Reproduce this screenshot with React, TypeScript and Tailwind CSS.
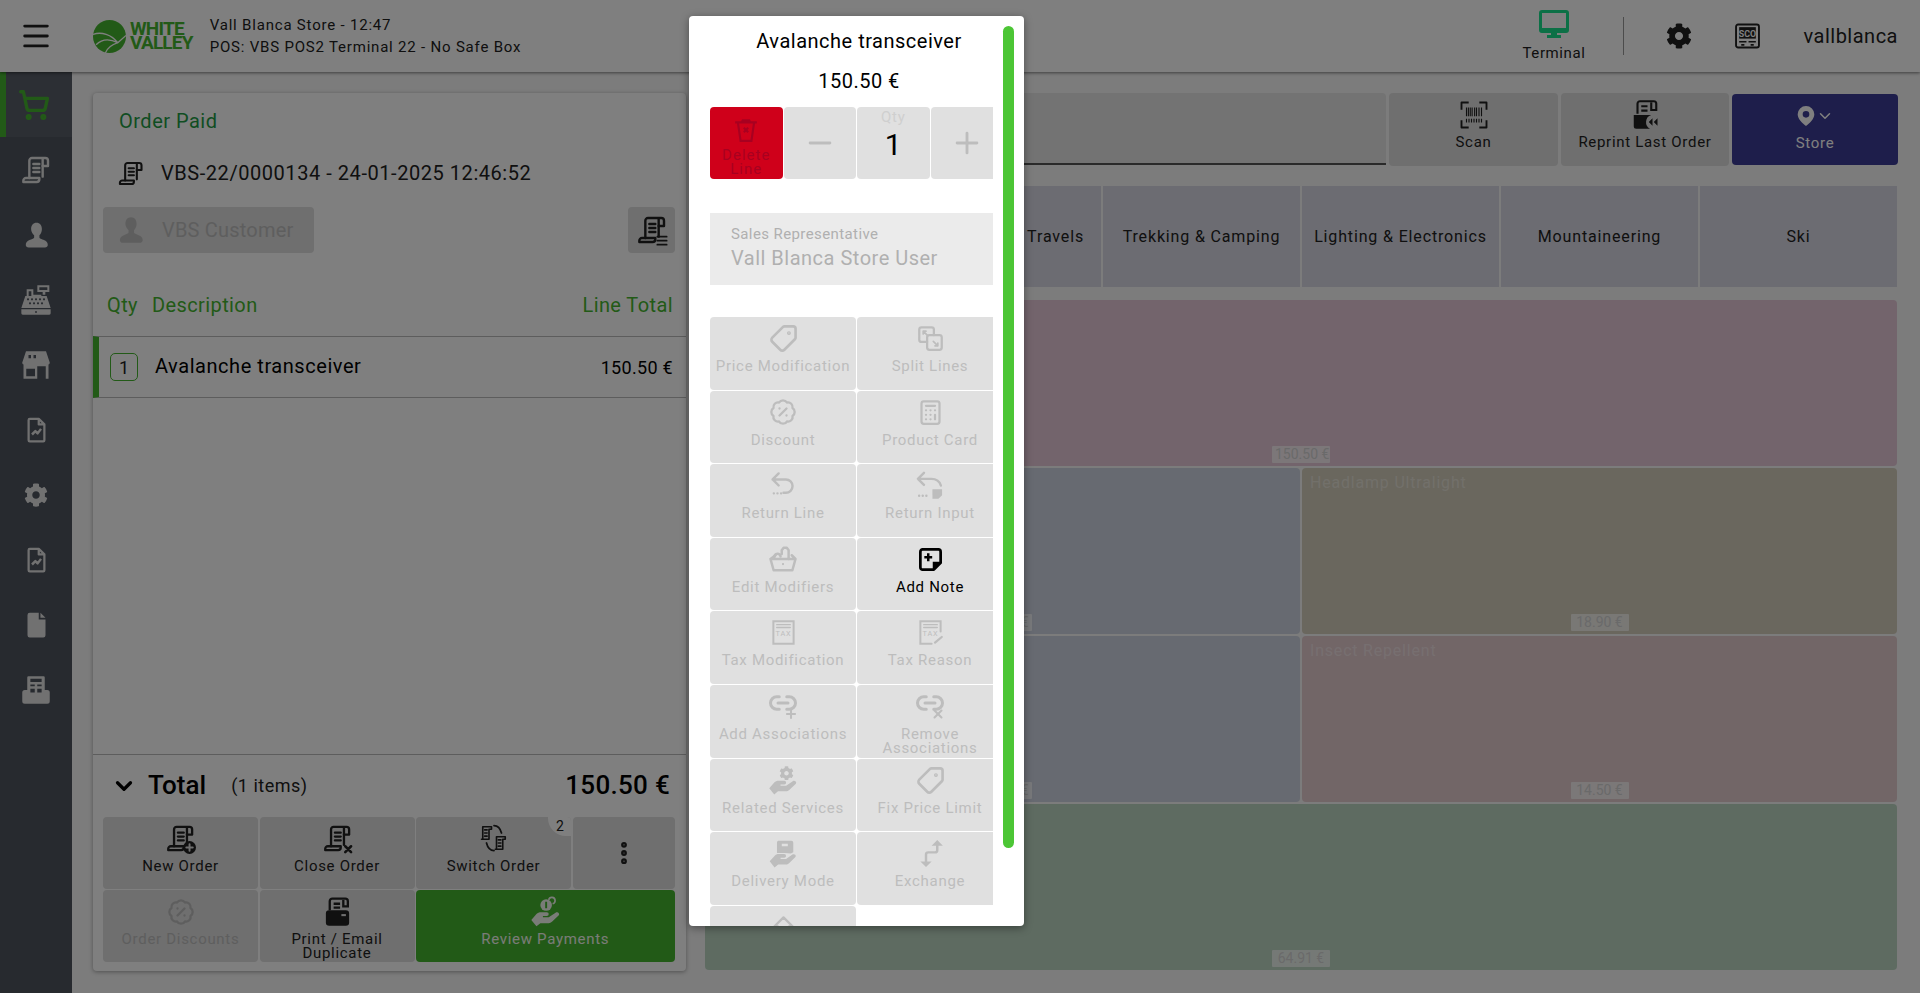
import React from 'react';
import { BadgePercent, Calculator, ChevronDown, EllipsisVertical, Link2, Menu, Minus, Plus, ShoppingCart, Tag, X } from 'lucide-react';
import { FaCog } from 'react-icons/fa';

type SvgProps = { className?: string };

const Svg: React.FC<SvgProps & { children: React.ReactNode }> = ({ className, children }) => (
  <svg viewBox="0 0 24 24" fill="none" stroke="currentColor" strokeWidth="1.8" strokeLinecap="round" strokeLinejoin="round" className={className}>
    {children}
  </svg>
);

const scroll = (
  <>
    <path d="M7 18V5a2 2 0 0 1 2-2h10a2 2 0 0 1 2 2v4h-4V4" />
    <path d="M17 9v8M2.500 21h10a2 2 0 0 0 2-2v-1H4.500a2 2 0 0 0-2 2z" />
    <path d="M10 7.500h4.500M10 10.500h4.500M10 13.500h4.500" />
  </>
);

const ScrollIcon: React.FC<SvgProps> = ({ className }) => <Svg className={className}>{scroll}</Svg>;

const ScrollBadge: React.FC<SvgProps & { children: React.ReactNode }> = ({ className, children }) => (
  <Svg className={className}>
    {scroll}
    {children}
  </Svg>
);

const SwitchIcon: React.FC<SvgProps> = ({ className }) => (
  <Svg className={className}>
    <path strokeWidth="1.300" d="M3 13V3h7v2h-2v8H2zM4.500 5.500h2M4.500 8h2M4.500 10.500h2M14 21V11h7v2h-2v8h-6zM15.500 13.500h2M15.500 16h2M15.500 18.500h2" />
    <path strokeWidth="1.400" d="M12 2c3 0 5 2 6 6M12 22c-3 0-5-2-6-6" />
  </Svg>
);

const PrinterScroll: React.FC<SvgProps> = ({ className }) => (
  <svg viewBox="0 0 24 24" className={className}>
    <path fill="none" stroke="currentColor" strokeWidth="1.800" d="M6 11V4a2 2 0 0 1 2-2h10a2 2 0 0 1 2 2v4h-3.500V3M9 6h5M9 9h5" />
    <rect x="3" y="11" width="18" height="12" rx="2.500" fill="currentColor" />
    <rect x="15" y="14" width="3.500" height="1.600" fill="#dedede" />
  </svg>
);

const UserIcon: React.FC<SvgProps> = ({ className }) => (
  <svg viewBox="0 0 24 24" fill="currentColor" className={className}>
    <path d="M12 1c3 0 4.800 2.400 4.800 5.600 0 2.400-1 4.400-2.200 5.600v2c0 1 3 1.600 5.400 3 1.600 1 2 2.200 2 3.800 0 1-1 2-2.500 2H5c-1.500 0-2.500-1-2.500-2 0-1.600.4-2.800 2-3.800 2.400-1.400 5.400-2 5.400-3v-2C8.700 11 7.200 9 7.200 6.600 7.200 3.400 9 1 12 1z" />
  </svg>
);

const CashIcon: React.FC<SvgProps> = ({ className }) => (
  <svg viewBox="0 0 24 24" fill="currentColor" className={className}>
    <path fillRule="evenodd" d="M13 1h9v5h-3v2h-2V6h-4zM14.500 2.500v2h6v-2zM5 4h5v4h6v1h4l3 9H1l3-9h1zM6.500 5.500V9h2V5.500zM1 19h22v3a1 1 0 0 1-1 1H2a1 1 0 0 1-1-1z" />
    <g fill="#4e545e">
      <circle cx="6" cy="11.500" r=".8" /><circle cx="9" cy="11.500" r=".8" /><circle cx="12" cy="11.500" r=".8" /><circle cx="15" cy="11.500" r=".8" /><circle cx="18" cy="11.500" r=".8" />
      <circle cx="7.500" cy="14.500" r=".8" /><circle cx="10.500" cy="14.500" r=".8" /><circle cx="13.500" cy="14.500" r=".8" /><circle cx="16.500" cy="14.500" r=".8" /><circle cx="12" cy="21" r=".7" />
    </g>
  </svg>
);

const StoreIcon: React.FC<SvgProps> = ({ className }) => (
  <svg viewBox="0 0 24 24" fill="currentColor" className={className}>
    <path d="M4 1h16l3 9c0 1-.5 1.500-1 1.500V23H2V11.500c-.5 0-1-.5-1-1.500zM4.200 13v8h7v-6h-7zM13 13v10h6.800V13zM6 4v2.500h2V4zM10 4v2.500h2V4z" fillRule="evenodd" />
  </svg>
);

const DocChart: React.FC<SvgProps> = ({ className }) => (
  <svg viewBox="0 0 24 24" fill="none" stroke="currentColor" strokeWidth="2" strokeLinejoin="round" className={className}>
    <path d="M5 3a1 1 0 0 1 1-1h8l5 5v14a1 1 0 0 1-1 1H6a1 1 0 0 1-1-1zM14 2v5h5" />
    <path d="M8 16l3-3 2 2 3-4" strokeWidth="2.200" />
  </svg>
);

const FileIcon: React.FC<SvgProps> = ({ className }) => (
  <svg viewBox="0 0 24 24" fill="currentColor" className={className}>
    <path d="M6 1h8v6h6v14a2 2 0 0 1-2 2H6a2 2 0 0 1-2-2V3a2 2 0 0 1 2-2zM15.500 1l4.500 4.500h-4.500z" />
  </svg>
);

const PosIcon: React.FC<SvgProps> = ({ className }) => (
  <svg viewBox="0 0 24 24" fill="currentColor" className={className}>
    <path fillRule="evenodd" d="M6 1h12a1 1 0 0 1 1 1v10h2a2 2 0 0 1 2 2v7a2 2 0 0 1-2 2H3a2 2 0 0 1-2-2v-7a2 2 0 0 1 2-2h2V2a1 1 0 0 1 1-1zM7.500 3v2.500h9V3zM7.500 7.500V9H11V7.500zM13 7.500V9h3.500V7.500zM7.500 11v3H11v-3zM13 11v3h3.500v-3z" />
  </svg>
);

const handPath = 'M1 18.500l4-4.500c1-1 2-1.500 3.500-1.500H13a1.500 1.500 0 0 1 0 3h-3v1h4.500l5.300-3.600c1.500-.9 3.500.6 2.500 2L17 20c-.8.7-1.600 1-2.600 1H8l-3 2.500z';

const GearHand: React.FC<SvgProps> = ({ className }) => (
  <span className={`relative block ${className}`}>
    <svg viewBox="0 0 24 24" fill="currentColor" className="absolute inset-x-0 bottom-0 w-full"><path d={handPath} /></svg>
    <FaCog className="absolute left-[38%] top-0 h-[50%] w-[50%]" />
  </span>
);

const CoinHand: React.FC<SvgProps> = ({ className }) => (
  <svg viewBox="0 0 24 24" fill="currentColor" className={className}>
    <path d={handPath} />
    <circle cx="12.500" cy="7" r="4.500" />
    <path fill="none" stroke="#45b52f" strokeWidth="1.500" d="M12.500 4.500v5" />
    <path fill="none" stroke="currentColor" strokeWidth="1.300" d="M14.500 3a2.500 2.500 0 1 1 3 3" />
  </svg>
);

const BoxHand: React.FC<SvgProps> = ({ className }) => (
  <svg viewBox="0 0 24 24" fill="currentColor" className={className}>
    <path fillRule="evenodd" d="M8 1.500h11a1.500 1.500 0 0 1 1.500 1.500v8l-2 1-5-.5H7V3A1.500 1.500 0 0 1 8 1.500zM11 4v2h5V4z" />
    <path d={handPath} />
  </svg>
);

const SplitIcon: React.FC<SvgProps> = ({ className }) => (
  <Svg className={className}>
    <path strokeWidth="2" d="M15 9V4a2 2 0 0 0-2-2H4a2 2 0 0 0-2 2v9a2 2 0 0 0 2 2h5" />
    <rect x="9" y="9" width="13" height="13" rx="2" strokeWidth="2" />
    <path d="M5.500 5.500l4 4M5.500 5.500h2.500M5.500 5.500V8M18.500 18.500l-4-4M18.500 18.500H16M18.500 18.500V16" strokeWidth="1.500" />
  </Svg>
);

const ReturnIcon: React.FC<SvgProps & { note?: boolean }> = ({ className, note }) => (
  <Svg className={className}>
    <path strokeWidth="2" d={note ? 'M7 1.500L2 6.500l5 5M2 6.500h11c4 0 7 2 8 5.500' : 'M8 2L3 7l5 5M3 7h11a5.500 5.500 0 0 1 0 11h-2'} />
    <path strokeWidth="2" d={note ? 'M3 20.500h.01M6 20.500h.01M9 20.500h.01' : 'M4 18.500h.01M7 18.500h.01M10 18.500h.01'} />
    {note && <path fill="currentColor" stroke="none" d="M14 15h8v5l-3 3h-5z" />}
  </Svg>
);

const BasketIcon: React.FC<SvgProps> = ({ className }) => (
  <Svg className={className}>
    <path strokeWidth="2" d="M2 12h20l-2.500 9h-15zM2 12l4-3M22 12l-3-3" />
    <path strokeWidth="2" d="M5 11c0-4 5-4 5-1M11 8V5l1.500-2h2.500l1.500 2v7" />
    <path d="M12 16h.01" />
  </Svg>
);

const NoteIcon: React.FC<SvgProps> = ({ className }) => (
  <svg viewBox="0 0 24 24" className={className}>
    <path fill="none" stroke="currentColor" strokeWidth="2.400" strokeLinejoin="round" d="M3 5a2 2 0 0 1 2-2h14a2 2 0 0 1 2 2v10l-6 6H5a2 2 0 0 1-2-2z" />
    <path fill="currentColor" d="M14 14h8l-8 8z" />
    <path stroke="currentColor" strokeWidth="2.200" d="M6.500 10h7M10 6.500v7" />
  </svg>
);

const TaxIcon: React.FC<SvgProps & { pencil?: boolean }> = ({ className, pencil }) => (
  <Svg className={className}>
    <path strokeWidth="1.800" strokeLinejoin="miter" d={pencil ? 'M21 11V2H3v20h10' : 'M3 2h18v20H3z'} />
    <path strokeWidth="1.300" d="M6 5h12M6 7.500h12" />
    <text x="12" y="15" textAnchor="middle" fontSize="6.500" fontFamily="Roboto" stroke="none" fill="currentColor">TAX</text>
    {pencil && <path strokeWidth="2" d="M16 21l6-5" />}
  </Svg>
);

const ExchangeIcon: React.FC<SvgProps> = ({ className }) => (
  <Svg className={className}>
    <path strokeWidth="2.200" d="M8 20v-7a2 2 0 0 1 2-2h6a2 2 0 0 0 2-2V3" />
    <path fill="currentColor" stroke="none" d="M18 0l5 5H13zM8 24L3 19h10z" />
  </Svg>
);

const LinkBadge: React.FC<SvgProps & { remove?: boolean }> = ({ className, remove }) => (
  <span className={`relative block ${className}`}>
    <Link2 strokeWidth={2.400} className="absolute -top-[3px] left-0 h-[30px] w-[30px]" />
    {remove ? <X strokeWidth={3.500} className="absolute bottom-0 right-0 h-[14px] w-[14px]" /> : <Plus strokeWidth={3.500} className="absolute bottom-0 right-0 h-[14px] w-[14px]" />}
  </span>
);

const ScanIcon: React.FC<SvgProps> = ({ className }) => (
  <Svg className={className}>
    <path strokeWidth="1.500" strokeLinecap="square" d="M2 7V2h5M17 2h5v5M22 17v5h-5M7 22H2v-5" />
    <path strokeWidth=".9" strokeLinecap="butt" d="M6 6v7M7.500 6v7M9 6v7M10.500 6v7M12.500 6v7M14 6v7M16 6v7M18 6v7M6 15v3M8 15v3M10 15v3M12 15v3M14 15v3M16 15v3M18 15v3" />
  </Svg>
);

const ReprintIcon: React.FC<SvgProps> = ({ className }) => (
  <svg viewBox="0 0 24 24" className={className}>
    <path fill="none" stroke="currentColor" strokeWidth="1.700" d="M6 11V3a2 2 0 0 1 2-2h11a2 2 0 0 1 2 2v5h-4V2M9 5h5M9 8.500h5" />
    <path fill="currentColor" d="M3 12h14a6 6 0 0 0-1 11H5a2 2 0 0 1-2-2z" />
    <path fill="currentColor" d="M18 14.500v6l-3-3zM22 14.500v6l-3-3z" />
  </svg>
);

const Terminal: React.FC<SvgProps> = ({ className }) => (
  <svg viewBox="0 0 30 28" className={className}>
    <path fillRule="evenodd" fill="currentColor" d="M3 0h24a3 3 0 0 1 3 3v17a3 3 0 0 1-3 3h-9v2h4v3H8v-3h4v-2H3a3 3 0 0 1-3-3V3a3 3 0 0 1 3-3zM3 3v15h24V3z" />
  </svg>
);

const Sco: React.FC<SvgProps> = ({ className }) => (
  <svg viewBox="0 0 24 24" className={className}>
    <rect x="1" y="1" width="22" height="22" rx="2" fill="none" stroke="currentColor" strokeWidth="1.800" />
    <rect x="4" y="3.500" width="16" height="11" fill="currentColor" />
    <text x="12" y="12.500" textAnchor="middle" fontSize="8.500" fontWeight="700" fontFamily="Roboto" fill="#fff">SCO</text>
    <path stroke="currentColor" strokeWidth="1.600" d="M4 17.500h7M13 17.500h7M6 20.500h3M15 20.500h3" />
  </svg>
);

const sideIcons = [
  <ScrollIcon className="h-[32px] w-[32px]" />,
  <UserIcon className="h-[30px] w-[27px]" />,
  <CashIcon className="h-[32px] w-[32px]" />,
  <StoreIcon className="h-[30px] w-[32px]" />,
  <DocChart className="h-[30px] w-[27px]" />,
  <FaCog className="h-[26px] w-[24px]" />,
  <DocChart className="h-[30px] w-[27px]" />,
  <FileIcon className="h-[30px] w-[27px]" />,
  <PosIcon className="h-[30px] w-[30px]" />,
];

const actions: { label?: React.ReactNode; icon: React.ReactNode; on?: boolean }[] = [
  { label: 'Price Modification', icon: <Tag strokeWidth={2.200} className="h-[29px] w-[29px] rotate-90" /> },
  { label: 'Split Lines', icon: <SplitIcon className="h-[27px] w-[27px]" /> },
  { label: 'Discount', icon: <BadgePercent strokeWidth={2} className="h-[28px] w-[28px]" /> },
  { label: 'Product Card', icon: <Calculator strokeWidth={2} className="h-[27px] w-[27px]" /> },
  { label: 'Return Line', icon: <ReturnIcon className="h-[29px] w-[29px]" /> },
  { label: 'Return Input', icon: <ReturnIcon note className="h-[29px] w-[32px]" /> },
  { label: 'Edit Modifiers', icon: <BasketIcon className="h-[30px] w-[30px]" /> },
  { label: 'Add Note', icon: <NoteIcon className="h-[27px] w-[27px]" />, on: true },
  { label: 'Tax Modification', icon: <TaxIcon className="h-[27px] w-[27px]" /> },
  { label: 'Tax Reason', icon: <TaxIcon pencil className="h-[27px] w-[27px]" /> },
  { label: 'Add Associations', icon: <LinkBadge className="h-[30px] w-[30px]" /> },
  { label: <>Remove<br />Associations</>, icon: <LinkBadge remove className="h-[30px] w-[30px]" /> },
  { label: 'Related Services', icon: <GearHand className="h-[29px] w-[30px]" /> },
  { label: 'Fix Price Limit', icon: <Tag strokeWidth={2.200} className="h-[29px] w-[29px] rotate-90" /> },
  { label: 'Delivery Mode', icon: <BoxHand className="h-[29px] w-[30px]" /> },
  { label: 'Exchange', icon: <ExchangeIcon className="h-[27px] w-[27px]" /> },
  { icon: <Svg className="h-[27px] w-[27px]"><path strokeWidth="2" d="M4 11l8-8 8 8h-3v8H7v-8z" /></Svg> },
];

const Tile: React.FC<{ icon: React.ReactNode; label?: React.ReactNode; className?: string }> = ({ icon, label, className }) => (
  <button className={`flex flex-col items-center overflow-hidden rounded pt-[6px] text-center text-[15px] leading-[14px] tracking-[0.7px] ${className}`}>
    <span className="flex h-[31px] items-center justify-center">{icon}</span>
    <span className="mt-[5px]">{label}</span>
  </button>
);

const products = [
  { price: '150.50 €', bg: 'bg-[#e6c8d8]', wide: true },
  { price: '€', bg: 'bg-[#ced5e2]' },
  { name: 'Headlamp Ultralight', price: '18.90 €', bg: 'bg-[#d4cebc]' },
  { price: '€', bg: 'bg-[#ced5e2]' },
  { name: 'Insect Repellent', price: '14.50 €', bg: 'bg-[#e4cccf]' },
  { price: '64.91 €', bg: 'bg-[#bcd6c3]', wide: true },
];

const categories = ['Trekking & Camping', 'Lighting & Electronics', 'Mountaineering', 'Ski'];

export default function App() {
  return (
    <div className="relative flex h-[993px] w-[1920px] flex-col overflow-hidden bg-[#f8f8f8] font-[Roboto,sans-serif] text-[#212121]">
      <header className="z-10 flex h-[72px] shrink-0 items-center bg-white shadow-[0_1px_3px_rgba(0,0,0,0.5)]">
        <Menu strokeWidth={2} className="ml-[19px] h-[34px] w-[34px]" />
        <div className="ml-[40px] flex items-center">
          <svg viewBox="0 0 32 32" className="h-[33px] w-[33px] text-[#45b52f]">
            <circle cx="16" cy="16" r="16" fill="currentColor" />
            <path fill="none" stroke="#fff" strokeWidth="1.300" d="M0 14c8-3 18 0 24 8l8-7M24 22c-6 2-10 5-12 10M24 22C14 17 8 19 3 24" />
          </svg>
          <div className="ml-[4px] text-[19px] font-bold leading-[14px] tracking-[-0.8px] text-[#45b52f]">
            <div>WHITE</div>
            <div>VALLEY</div>
          </div>
        </div>
        <div className="ml-[17px] text-[15px] leading-[22px] tracking-[0.8px]">
          <div>Vall Blanca Store - 12:47</div>
          <div>POS: VBS POS2 Terminal 22 - No Safe Box</div>
        </div>
        <div className="ml-auto flex flex-col items-center">
          <Terminal className="h-[28px] w-[30px] text-[#18e08c]" />
          <span className="mt-[6px] text-[15px] leading-[18px] tracking-[0.6px]">Terminal</span>
        </div>
        <div className="ml-[38px] h-[38px] w-px bg-[#999]" />
        <FaCog className="ml-[42px] h-[26px] w-[26px]" />
        <Sco className="ml-[43px] h-[26px] w-[25px]" />
        <span className="ml-[43px] mr-[22px] text-[20px] tracking-[0.5px]">vallblanca</span>
      </header>

      <div className="flex min-h-0 flex-1">
        <nav className="w-[72px] shrink-0 bg-[#4e545e] text-[#e2e2e2]">
          <div className="flex h-[65px] items-center justify-center border-l-[6px] border-[#45b52f] bg-[#585e68] pr-[10px]">
            <ShoppingCart strokeWidth={2.500} className="h-[32px] w-[32px] text-[#45b52f]" />
          </div>
          {sideIcons.map((icon, i) => (
            <div key={i} className="flex h-[65px] items-center justify-center">
              {icon}
            </div>
          ))}
        </nav>

        <main className="flex min-w-0 flex-1 gap-[19px] pl-[21px] pt-[21px]">
          <section className="flex h-[878px] w-[593px] shrink-0 flex-col rounded bg-white pb-[9px] shadow-[0_1px_4px_rgba(0,0,0,0.35)]">
            <div className="pl-[26px] pt-[14px] text-[20px] leading-[28px] tracking-[0.5px] text-[#1f9c45]">Order Paid</div>
            <div className="mt-[17px] flex h-[42px] items-center pl-[24px]">
              <ScrollIcon className="h-[29px] w-[28px]" />
              <span className="ml-[16px] text-[20px] tracking-[0.55px]">VBS-22/0000134 - 24-01-2025 12:46:52</span>
            </div>
            <div className="mt-[13px] flex justify-between pl-[10px] pr-[11px]">
              <button className="flex h-[46px] w-[211px] items-center rounded bg-[#dedede] pl-[14px] text-[20px] tracking-[0.2px] text-[#bdbdbd]">
                <UserIcon className="h-[28px] w-[28px]" />
                <span className="ml-[17px]">VBS Customer</span>
              </button>
              <button className="flex h-[46px] w-[47px] items-center justify-center rounded bg-[#dedede]">
                <ScrollBadge className="h-[32px] w-[32px]">
                  <path strokeWidth="1.300" d="M16 17h7M16 20h7M16 23h7" />
                </ScrollBadge>
              </button>
            </div>
            <div className="mt-[38px] flex h-[28px] items-center pl-[14px] pr-[13px] text-[20px] tracking-[0.4px] text-[#45b52f]">
              <span>Qty</span>
              <span className="ml-[14px]">Description</span>
              <span className="ml-auto">Line Total</span>
            </div>
            <div className="mt-[17px] flex h-[62px] items-center border-y border-[#bbb] border-l-[6px] border-l-[#45b52f] pl-[11px] pr-[13px]">
              <span className="flex h-[28px] w-[28px] items-center justify-center rounded-[5px] border border-[#45b52f] text-[18px]">1</span>
              <span className="ml-[17px] -mt-[3px] text-[20px] tracking-[0.55px] text-black">Avalanche transceiver</span>
              <span className="ml-auto text-[18px] tracking-[0.3px] text-black">150.50 €</span>
            </div>
            <div className="flex-1" />
            <div className="flex h-[63px] items-center border-t border-[#bbb] pl-[18px] pr-[16px]">
              <ChevronDown strokeWidth={3} className="h-[26px] w-[26px] text-black" />
              <span className="ml-[11px] text-[26px] font-medium text-black">Total</span>
              <span className="ml-[25px] text-[18px] tracking-[0.5px]">(1 items)</span>
              <span className="ml-auto text-[26px] font-medium tracking-[0.3px] text-black">150.50 €</span>
            </div>
            <div className="grid grid-cols-[155px_155px_155px_102px] auto-rows-[72px] gap-[1.500px] pl-[10px] pr-[11px]">
              <Tile className="bg-[#dedede]" label="New Order" icon={<ScrollBadge className="h-[31px] w-[31px]"><circle cx="19" cy="19" r="5" fill="currentColor" stroke="none" /><path stroke="#dedede" strokeWidth="1.500" d="M19 16.500v5M16.500 19h5" /></ScrollBadge>} />
              <Tile className="bg-[#dedede]" label="Close Order" icon={<ScrollBadge className="h-[31px] w-[31px]"><path strokeWidth="2" d="M18 18l4.500 4.500M22.500 18L18 22.500" /></ScrollBadge>} />
              <div className="relative">
                <Tile className="h-full w-full bg-[#dedede]" label="Switch Order" icon={<SwitchIcon className="h-[32px] w-[30px]" />} />
                <span className="absolute right-0 top-0 h-[19px] w-[23px] rounded-bl-[18px] rounded-tr bg-white pl-[8px] text-[14px] leading-[18px]">2</span>
              </div>
              <button className="flex items-center justify-center rounded bg-[#dedede]">
                <EllipsisVertical strokeWidth={3} className="h-[28px] w-[28px]" />
              </button>
              <Tile className="bg-[#dedede] text-[#bdbdbd]" label="Order Discounts" icon={<BadgePercent strokeWidth={2} className="h-[28px] w-[28px]" />} />
              <Tile className="bg-[#dedede]" label={<>Print / Email<br />Duplicate</>} icon={<PrinterScroll className="h-[31px] w-[31px]" />} />
              <Tile className="col-span-2 bg-[#45b52f] text-[#f4f8f0]" label="Review Payments" icon={<CoinHand className="h-[31px] w-[31px]" />} />
            </div>
          </section>

          <section className="flex w-[1193px] shrink-0 flex-col">
            <div className="flex h-[73px] gap-[3px]">
              <div className="mb-[1px] flex-1 rounded-t border-b-2 border-[#555] bg-[#e6e6e6]" />
              <Tile className="h-[73px] w-[169px] bg-[#dedede]" label="Scan" icon={<ScanIcon className="h-[30px] w-[30px]" />} />
              <Tile className="h-[73px] w-[168px] bg-[#dedede]" label="Reprint Last Order" icon={<ReprintIcon className="h-[30px] w-[30px]" />} />
              <Tile className="h-[71px] w-[166px] self-center bg-[#3c3c96] text-white" label="Store" icon={<span className="flex items-center"><svg viewBox="0 0 24 24" className="h-[26px] w-[20px]" fill="currentColor"><path fillRule="evenodd" d="M12 0a10 10 0 0 1 10 10c0 6-6 11-10 14C8 21 2 16 2 10A10 10 0 0 1 12 0zm0 6a4 4 0 1 0 0 8 4 4 0 0 0 0-8z" /></svg><ChevronDown className="h-[18px] w-[18px]" /></span>} />
            </div>
            <div className="mr-[1px] mt-[20px] grid h-[101px] grid-cols-6 gap-[2px]">
              <div className="bg-[#d8d8e4]" />
              <div className="flex items-center justify-end bg-[#d8d8e4] pr-[17px] text-[16px] tracking-[0.85px]">Travels</div>
              {categories.map((c) => (
                <button key={c} className="flex items-center justify-center bg-[#d8d8e4] text-[16px] tracking-[0.85px]">
                  {c}
                </button>
              ))}
            </div>
            <div className="mr-[1px] mt-[13px] grid h-[670px] grid-cols-2 grid-rows-4 gap-[2px]">
              {products.map((p, i) => (
                <div key={i} className={`relative rounded px-[8px] pt-[3px] text-[16px] tracking-[0.8px] text-white/40 ${p.bg} ${p.wide ? 'col-span-2' : ''}`}>
                  {p.name}
                  <span className={`absolute bottom-[3px] left-1/2 h-[17px] w-[58px] -translate-x-1/2 whitespace-nowrap rounded-[1px] bg-white/70 px-[3px] text-[14px] leading-[17px] tracking-normal text-[#d4d4d4] ${p.price === '€' ? 'text-right' : 'text-center'}`}>
                    {p.price}
                  </span>
                </div>
              ))}
            </div>
          </section>
        </main>
      </div>

      <div className="absolute inset-0 z-20 bg-black/50" />

      <div className="absolute left-[689px] top-[16px] z-30 h-[910px] w-[335px] overflow-hidden rounded bg-white pl-[21px] shadow-[0_2px_8px_rgba(0,0,0,0.4)]">
        <div className="w-[298px] pt-[11px] text-center text-[20px] leading-[28px] tracking-[0.5px] text-black">Avalanche transceiver</div>
        <div className="mt-[12px] w-[298px] text-center text-[20px] leading-[28px] tracking-[0.5px] text-black">150.50 €</div>
        <div className="w-[283px] overflow-hidden">
          <div className="mt-[12px] grid w-[293px] grid-cols-4 gap-px">
            <button className="flex h-[72px] flex-col items-center rounded bg-[#cf001a] pt-[10px] text-[15px] leading-[14px] tracking-[1px] text-[#a80020]">
              <svg viewBox="0 0 24 24" className="h-[26px] w-[26px] shrink-0" fill="none" stroke="currentColor" strokeWidth="2"><path d="M2 5h20M8 5l1-2h6l1 2M4.500 5L7 22h10l2.500-17M10 10l4 4M14 10l-4 4" /></svg>
              <span className="mt-[5px] w-[60px]">Delete Line</span>
            </button>
            <button className="flex h-[72px] items-center justify-center rounded bg-[#e0e0e0] text-[#bdbdbd]">
              <Minus strokeWidth={2} className="h-[34px] w-[34px]" />
            </button>
            <div className="flex h-[72px] flex-col items-center rounded bg-[#e0e0e0] pt-[1px]">
              <span className="text-[15px] leading-[18px] tracking-[0.7px] text-[#cfcfcf]">Qty</span>
              <span className="text-[30px] leading-[38px] text-black">1</span>
            </div>
            <button className="flex h-[72px] items-center justify-center rounded bg-[#e0e0e0] text-[#bdbdbd]">
              <Plus strokeWidth={2} className="h-[34px] w-[34px]" />
            </button>
          </div>
          <div className="mt-[34px] h-[72px] bg-[#ebebeb] pl-[21px] pt-[11px] text-[#b0b0b0]">
            <div className="text-[15px] leading-[20px] tracking-[0.4px]">Sales Representative</div>
            <div className="text-[20px] leading-[28px] tracking-[0.5px]">Vall Blanca Store User</div>
          </div>
          <div className="mt-[32px] grid w-[293px] grid-cols-2 auto-rows-[72.600px] gap-px">
            {actions.map((a, i) => (
              <Tile key={i} icon={a.icon} label={a.label} className={`bg-[#e0e0e0] ${a.on ? 'text-black' : 'text-[#bdbdbd]'}`} />
            ))}
          </div>
        </div>
        <div className="absolute left-[314px] top-[10px] h-[822px] w-[11px] rounded-full bg-[#4cc635]" />
      </div>
    </div>
  );
}
